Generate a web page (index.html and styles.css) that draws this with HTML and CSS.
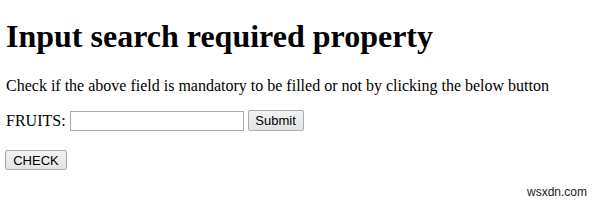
FILE: index.html
```html
<!DOCTYPE html>
<html>
<head>
<meta charset="utf-8">
<link rel="stylesheet" href="styles.css">
</head>
<body>
<h1 class="title">Input search required property</h1>
<p class="desc">Check if the above field is mandatory to be filled or not by clicking the below button</p>
<form class="row">
<label class="lbl">FRUITS:</label>
<input class="field" type="search">
<button class="btn btn-submit" type="button">Submit</button>
</form>
<div class="row2"><button class="btn btn-check" type="button">CHECK</button></div>
<div class="mark">wsxdn.com</div>
</body>
</html>
```
FILE: styles.css
```css
html, body { margin: 0; padding: 0; background: #fff; }
body {
  font-family: "Liberation Serif", "Times New Roman", serif;
  color: #000;
  padding: 0 0 0 6px;
  width: 594px;
  height: 201px;
  position: relative;
  overflow: hidden;
}
.title {
  font-size: 32px;
  font-weight: bold;
  line-height: 37px;
  margin: 0;
  padding-top: 18px;
}
.desc {
  font-size: 16px;
  line-height: 18px;
  margin: 22px 0 0 0;
}
.row {
  display: flex;
  align-items: flex-end;
  margin: 15px 0 0 0;
  font-size: 16px;
  height: 21px;
}
.lbl {
  margin-right: 4px;
  line-height: 18px;
  margin-bottom: 1px;
}
.field {
  box-sizing: border-box;
  width: 174px;
  height: 20px;
  border: 1px solid #a9a9a9;
  padding: 0 2px;
  margin: 0;
  font-size: 13px;
  background: #fff;
  outline: none;
  -webkit-appearance: none;
  appearance: none;
  border-radius: 0;
}
.btn {
  box-sizing: border-box;
  font-family: "Liberation Sans", Arial, sans-serif;
  font-size: 13px;
  color: #000;
  border: 1px solid #adadad;
  border-radius: 2px;
  background: linear-gradient(#f2f2f2, #e3e3e3);
  padding: 0;
  margin: 0;
  line-height: 17px;
}
.btn-submit {
  width: 56px;
  height: 21px;
  margin-left: 4px;
}
.row2 {
  margin-top: 19px;
  height: 20px;
}
.btn-check {
  width: 62px;
  height: 20px;
  margin-left: -1px;
  font-size: 13px;
}
.mark {
  position: absolute;
  left: 527px;
  top: 185px;
  font-family: "Liberation Sans", Arial, sans-serif;
  font-size: 12px;
  color: #222;
}
```
